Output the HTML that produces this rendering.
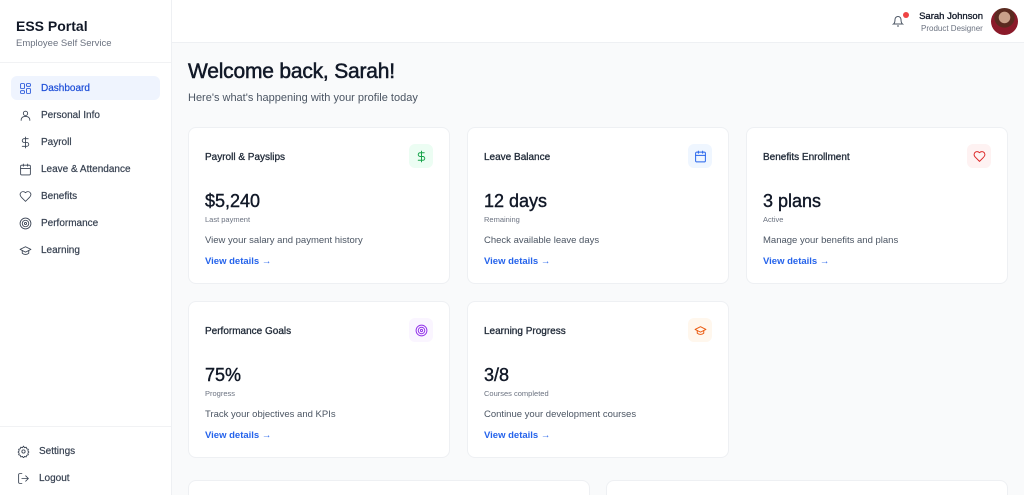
<!DOCTYPE html>
<html><head><meta charset="utf-8"><style>
*{box-sizing:border-box;margin:0;padding:0}
html,body{width:1024px;height:495px;overflow:hidden}
body{background:#f9fafb;font-family:"Liberation Sans",sans-serif;color:#111827;position:relative}
.side{position:absolute;left:0;top:0;width:172px;height:495px;background:#fff;border-right:1px solid #eef0f3}
.brand{height:63px;border-bottom:1px solid #f1f2f4;padding:18px 0 0 16px}
.brand h1{font-size:14px;font-weight:600;color:#111827}
.brand p{font-size:9.5px;color:#6b7280;margin-top:4px}
.nav{padding:13px 11px 0}
.item{height:24px;margin-bottom:3px;border-radius:6px;display:flex;align-items:center;padding-left:8px;font-size:10px;color:#374151;-webkit-text-stroke:0.2px}
.item svg{width:13px;height:13px;margin-right:9px;stroke:#374151;fill:none;stroke-width:1.6;stroke-linecap:round;stroke-linejoin:round}
.item.act{background:#eff4fe;color:#1d4ed8}
.item.act svg{stroke:#1d4ed8}
.bot{position:absolute;left:0;top:426px;width:171px;border-top:1px solid #f1f2f4;padding:12px 0 0 9px}
.bot .item{margin-bottom:3px}
.top{position:absolute;left:172px;top:0;right:0;height:43px;background:#fff;border-bottom:1px solid #eef0f3}
.main{position:absolute;left:188px;top:60px}
h2{font-size:21px;font-weight:normal;color:#111827;letter-spacing:-0.2px;-webkit-text-stroke:0.5px}
.sub{font-size:11px;color:#4b5563;margin-top:8px}
.card{position:absolute;width:262px;height:157px;background:#fff;border:1px solid #eef0f3;border-radius:8px;padding:0 16px}
.card .t{position:absolute;left:16px;top:24px;font-size:10px;color:#1f2937;-webkit-text-stroke:0.3px}
.ic{position:absolute;right:16px;top:16px;width:24px;height:24px;border-radius:6px;display:flex;align-items:center;justify-content:center}
.ic svg{width:13px;height:13px;fill:none;stroke-width:1.8;stroke-linecap:round;stroke-linejoin:round}
.v{position:absolute;left:16px;top:63px;font-size:18px;color:#111827;-webkit-text-stroke:0.4px}
.l{position:absolute;left:16px;top:87px;font-size:7.5px;color:#6b7280}
.d{position:absolute;left:16px;top:107px;font-size:9.5px;color:#4b5563}
.a{position:absolute;left:16px;top:128px;font-size:9.5px;font-weight:600;color:#2563eb}
</style></head><body>
<div class="side">
<div class="brand"><h1>ESS Portal</h1><p>Employee Self Service</p></div>
<div class="nav">
<div class="item act"><svg viewBox="0 0 24 24"><rect x="3" y="3" width="7" height="9" rx="1"/><rect x="14" y="3" width="7" height="5" rx="1"/><rect x="14" y="12" width="7" height="9" rx="1"/><rect x="3" y="16" width="7" height="5" rx="1"/></svg>Dashboard</div>
<div class="item"><svg viewBox="0 0 24 24"><circle cx="12" cy="8" r="4"/><path d="M4 21v-1a6 6 0 0 1 6-6h4a6 6 0 0 1 6 6v1"/></svg>Personal Info</div>
<div class="item"><svg viewBox="0 0 24 24"><path d="M12 2v20M17 5H9.5a3.5 3.5 0 0 0 0 7h5a3.5 3.5 0 0 1 0 7H6"/></svg>Payroll</div>
<div class="item"><svg viewBox="0 0 24 24"><rect x="3" y="4" width="18" height="18" rx="2"/><path d="M16 2v4M8 2v4M3 10h18"/></svg>Leave &amp; Attendance</div>
<div class="item"><svg viewBox="0 0 24 24"><path d="M19 14c1.5-1.5 3-3.2 3-5.5A5.5 5.5 0 0 0 16.5 3c-1.8 0-3 .5-4.5 2-1.5-1.5-2.7-2-4.5-2A5.5 5.5 0 0 0 2 8.5c0 2.3 1.5 4 3 5.5l7 7z"/></svg>Benefits</div>
<div class="item"><svg viewBox="0 0 24 24"><circle cx="12" cy="12" r="10"/><circle cx="12" cy="12" r="6"/><circle cx="12" cy="12" r="2"/></svg>Performance</div>
<div class="item"><svg viewBox="0 0 24 24"><path d="M22 10 12 5 2 10l10 5 10-5z"/><path d="M6 12v5c3 3 9 3 12 0v-5"/></svg>Learning</div>
</div>
<div class="bot">
<div class="item"><svg viewBox="0 0 24 24"><circle cx="12" cy="12" r="3"/><path d="M12 2l2 3 3-1 1 3 3 1-1 3 2 2-2 2 1 3-3 1-1 3-3-1-2 3-2-3-3 1-1-3-3-1 1-3-2-2 2-2-1-3 3-1 1-3 3 1z"/></svg>Settings</div>
<div class="item"><svg viewBox="0 0 24 24"><path d="M9 21H5a2 2 0 0 1-2-2V5a2 2 0 0 1 2-2h4M16 17l5-5-5-5M21 12H9"/></svg>Logout</div>
</div>
</div>
<div class="top">
<svg style="position:absolute;left:720px;top:15px" width="12" height="13" viewBox="0 0 24 24" fill="none" stroke="#4b5563" stroke-width="2"><path d="M6 8a6 6 0 0 1 12 0c0 7 3 9 3 9H3s3-2 3-9M10 21h4"/></svg>
<div style="position:absolute;left:731px;top:12px;width:6px;height:6px;border-radius:50%;background:#ef4444"></div>
<div style="position:absolute;right:41px;top:11px;font-size:9.5px;color:#111827;text-align:right;-webkit-text-stroke:0.3px">Sarah Johnson</div>
<div style="position:absolute;left:749px;top:24px;font-size:8px;color:#6b7280">Product Designer</div>
<div style="position:absolute;left:819px;top:8px;width:27px;height:27px;border-radius:50%;background:radial-gradient(circle at 50% 35%,#c9a08a 0 25%,#5a2a20 27% 45%,#8b1a2a 47%)"></div>
</div>
<div class="main"><h2>Welcome back, Sarah!</h2><p class="sub">Here's what's happening with your profile today</p></div>

<div class="card" style="left:188px;top:127px"><div class="t">Payroll &amp; Payslips</div><div class="ic" style="background:#ecfdf3"><svg viewBox="0 0 24 24" stroke="#16a34a"><path d="M12 2v20M17 5H9.5a3.5 3.5 0 0 0 0 7h5a3.5 3.5 0 0 1 0 7H6"/></svg></div><div class="v">$5,240</div><div class="l">Last payment</div><div class="d">View your salary and payment history</div><div class="a">View details →</div></div>
<div class="card" style="left:467px;top:127px"><div class="t">Leave Balance</div><div class="ic" style="background:#eff6ff"><svg viewBox="0 0 24 24" stroke="#2563eb"><rect x="3" y="4" width="18" height="18" rx="2"/><path d="M16 2v4M8 2v4M3 10h18"/></svg></div><div class="v">12 days</div><div class="l">Remaining</div><div class="d">Check available leave days</div><div class="a">View details →</div></div>
<div class="card" style="left:746px;top:127px"><div class="t">Benefits Enrollment</div><div class="ic" style="background:#fef2f2"><svg viewBox="0 0 24 24" stroke="#dc2626"><path d="M19 14c1.5-1.5 3-3.2 3-5.5A5.5 5.5 0 0 0 16.5 3c-1.8 0-3 .5-4.5 2-1.5-1.5-2.7-2-4.5-2A5.5 5.5 0 0 0 2 8.5c0 2.3 1.5 4 3 5.5l7 7z"/></svg></div><div class="v">3 plans</div><div class="l">Active</div><div class="d">Manage your benefits and plans</div><div class="a">View details →</div></div>
<div class="card" style="left:188px;top:301px"><div class="t">Performance Goals</div><div class="ic" style="background:#faf5ff"><svg viewBox="0 0 24 24" stroke="#9333ea"><circle cx="12" cy="12" r="10"/><circle cx="12" cy="12" r="6"/><circle cx="12" cy="12" r="2"/></svg></div><div class="v">75%</div><div class="l">Progress</div><div class="d">Track your objectives and KPIs</div><div class="a">View details →</div></div>
<div class="card" style="left:467px;top:301px"><div class="t">Learning Progress</div><div class="ic" style="background:#fff7ed"><svg viewBox="0 0 24 24" stroke="#ea580c"><path d="M22 10 12 5 2 10l10 5 10-5z"/><path d="M6 12v5c3 3 9 3 12 0v-5"/></svg></div><div class="v">3/8</div><div class="l">Courses completed</div><div class="d">Continue your development courses</div><div class="a">View details →</div></div>
<div class="card" style="left:188px;top:480px;width:402px;height:30px"></div>
<div class="card" style="left:606px;top:480px;width:402px;height:30px"></div>
</body></html>
